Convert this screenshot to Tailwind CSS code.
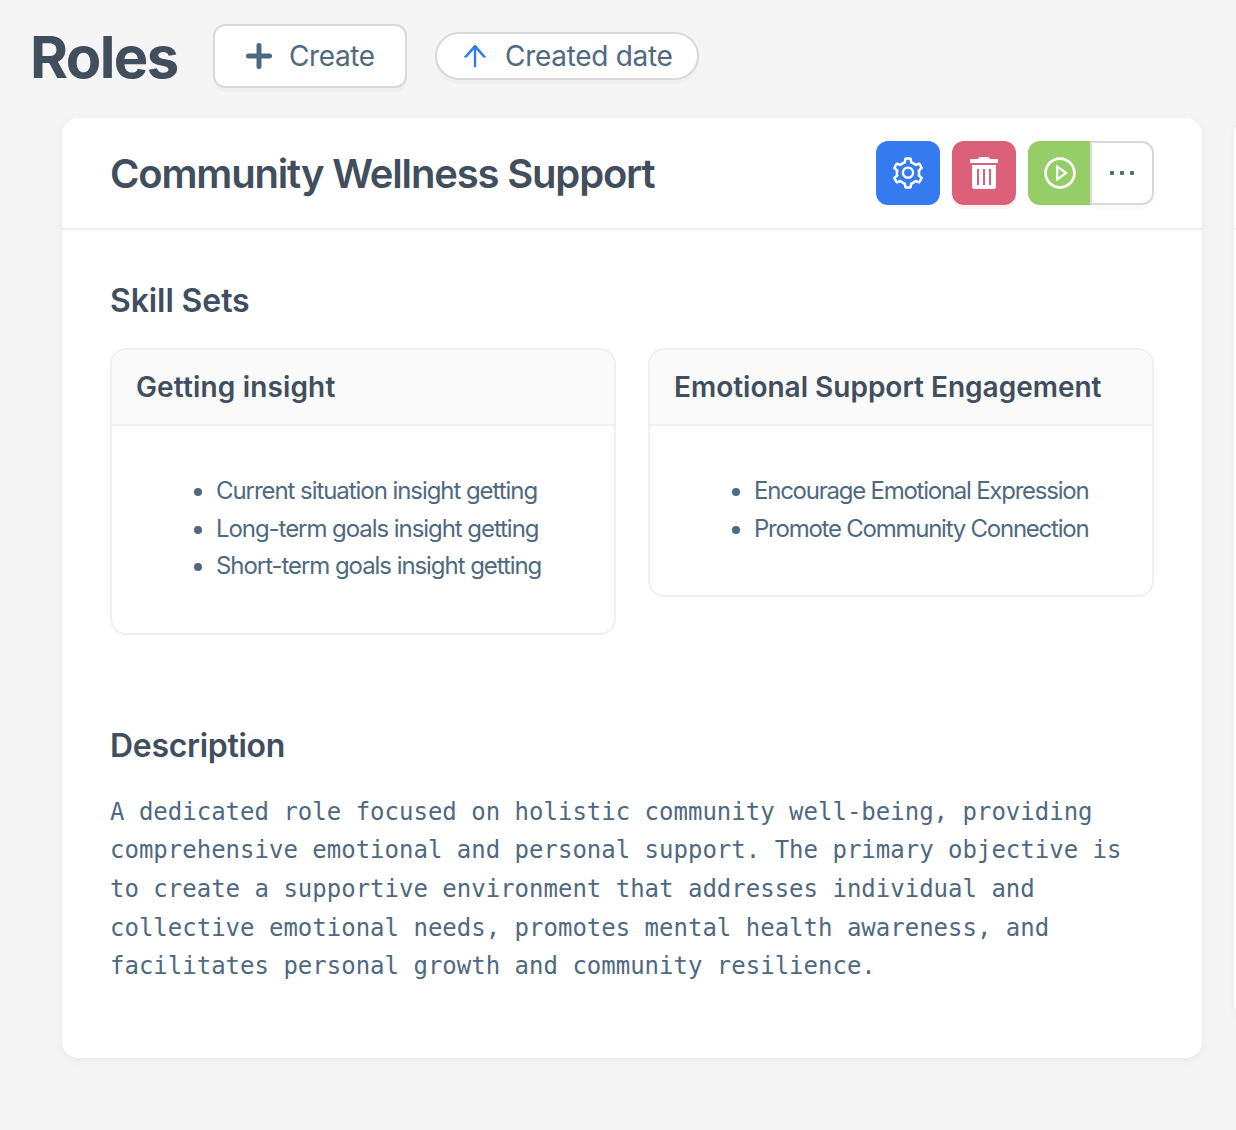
<!DOCTYPE html>
<html lang="en">
<head>
    <meta charset="UTF-8">
    <meta name="viewport" content="width=device-width, initial-scale=1.0">
    <title>Roles</title>
    <script src="https://cdn.jsdelivr.net/npm/@tailwindcss/browser@4"></script>
</head>
<body class="bg-[#f5f5f5] font-['Inter',sans-serif] text-[#4f6980] h-screen overflow-hidden">
    <header class="flex items-center h-[118px] pb-[6px] pl-[30px] whitespace-nowrap">
        <h1 class="w-[183px] pt-[2px] text-[58px] leading-none font-bold tracking-[-1.6px] text-[#414e5e]">Roles</h1>
        <button class="flex items-center w-[194px] h-16 pl-[31px] bg-white border-2 border-[#d9d9d9] rounded-xl shadow-[0_4px_0_rgba(0,0,0,0.02)] text-[28px] tracking-[-0.4px]">
            <svg class="w-[26px] h-[26px] mr-[17px] shrink-0" viewBox="0 0 26 26" fill="none" stroke="currentColor" stroke-width="5" stroke-linecap="round"><path d="M13 2.5v21M2.5 13h21"/></svg>
            Create
        </button>
        <button class="flex items-center w-[264px] h-12 ml-7 pl-[22px] bg-white border-2 border-[#d9d9d9] rounded-full shadow-[0_4px_0_rgba(0,0,0,0.02)] text-[28px] tracking-[-0.3px]">
            <svg class="w-8 h-8 mr-[14px] shrink-0 text-[#347bf0]" viewBox="0 0 1024 1024" fill="currentColor"><path d="M868 545.5L536.1 163a31.96 31.96 0 00-48.3 0L156 545.5a7.97 7.97 0 006 13.2h81c4.6 0 9-2 12.1-5.5L474 300.9V864c0 4.4 3.6 8 8 8h60c4.4 0 8-3.6 8-8V300.9l218.9 252.3c3 3.5 7.4 5.5 12.1 5.5h81c6.8 0 10.5-8 6-13.2z"/></svg>
            Created date
        </button>
    </header>

    <main class="flex items-start gap-8 pl-[62px]">
        <article class="w-[1140px] h-[940px] shrink-0 bg-white rounded-2xl shadow-[0_2px_8px_rgba(0,0,0,0.06)]">
            <div class="flex items-center justify-between h-28 px-12 border-b-2 border-[#f0f0f0]">
                <h2 class="pt-[2px] text-[40px] font-semibold tracking-[-1.17px] text-[#414e5e] whitespace-nowrap">Community Wellness Support</h2>
                <div class="flex gap-3">
                    <button class="flex items-center justify-center size-16 rounded-xl bg-[#347bf0] text-white" aria-label="Settings">
                        <svg class="size-9" viewBox="0 0 1024 1024" fill="currentColor"><path d="M924.8 625.7l-65.5-56c3.1-19 4.7-38.4 4.7-57.8s-1.6-38.8-4.7-57.8l65.5-56a32.03 32.03 0 009.3-35.2l-.9-2.6a443.74 443.74 0 00-79.7-137.9l-1.8-2.1a32.12 32.12 0 00-35.1-9.5l-81.3 28.9c-30-24.6-63.5-44-99.7-57.6l-15.7-85a32.05 32.05 0 00-25.8-25.7l-2.7-.5c-52.1-9.4-106.9-9.4-159 0l-2.7.5a32.05 32.05 0 00-25.8 25.7l-15.8 85.4a351.86 351.86 0 00-99 57.4l-81.9-29.1a32 32 0 00-35.1 9.5l-1.8 2.1a446.02 446.02 0 00-79.7 137.9l-.9 2.6c-4.5 12.5-.8 26.5 9.3 35.2l66.3 56.6c-3.1 18.8-4.6 38-4.6 57.1 0 19.2 1.5 38.4 4.6 57.1L99 625.5a32.03 32.03 0 00-9.3 35.2l.9 2.6c18.1 50.4 44.9 96.9 79.7 137.9l1.8 2.1a32.12 32.12 0 0035.1 9.5l81.9-29.1c29.8 24.5 63.1 43.9 99 57.4l15.8 85.4a32.05 32.05 0 0025.8 25.7l2.7.5a449.4 449.4 0 00159 0l2.7-.5a32.05 32.05 0 0025.8-25.7l15.7-85a350 350 0 0099.7-57.6l81.3 28.9a32 32 0 0035.1-9.5l1.8-2.1c34.8-41.1 61.6-87.5 79.7-137.9l.9-2.6c4.5-12.3.8-26.3-9.3-35zM788.3 465.9c2.5 15.1 3.8 30.6 3.8 46.1s-1.3 31-3.8 46.1l-6.6 40.1 74.7 63.9a370.03 370.03 0 01-42.6 73.6L721 702.8l-31.4 25.8c-23.9 19.6-50.5 35-79.3 45.8l-38.1 14.3-17.9 97a377.5 377.5 0 01-85 0l-17.9-97.2-37.8-14.5c-28.5-10.8-55-26.2-78.7-45.7l-31.4-25.9-93.4 33.2c-17-22.9-31.2-47.6-42.6-73.6l75.5-64.5-6.5-40c-2.4-14.9-3.7-30.3-3.7-45.5 0-15.3 1.2-30.6 3.7-45.5l6.5-40-75.5-64.5c11.3-26.1 25.6-50.7 42.6-73.6l93.4 33.2 31.4-25.9c23.7-19.5 50.2-34.9 78.7-45.7l37.9-14.3 17.9-97.2c28.1-3.2 56.8-3.2 85 0l17.9 97 38.1 14.3c28.7 10.8 55.4 26.2 79.3 45.8l31.4 25.8 92.8-32.9c17 22.9 31.2 47.6 42.6 73.6L781.8 426l6.5 39.9zM512 326c-97.2 0-176 78.8-176 176s78.8 176 176 176 176-78.8 176-176-78.8-176-176-176zm79.2 255.2A111.6 111.6 0 01512 614c-29.9 0-58-11.7-79.2-32.8A111.6 111.6 0 01400 502c0-29.9 11.7-58 32.8-79.2C454 401.6 482.1 390 512 390c29.9 0 58 11.6 79.2 32.8A111.6 111.6 0 01624 502c0 29.9-11.7 58-32.8 79.2z"/></svg>
                    </button>
                    <button class="flex items-center justify-center size-16 rounded-xl bg-[#dc6079] text-white shadow-[0_4px_0_rgba(255,38,5,0.06)]" aria-label="Delete">
                        <svg class="w-7 h-8" viewBox="0 0 28 32" fill="currentColor">
                            <path fill-rule="evenodd" d="M2 8h24v21.5a2.5 2.5 0 0 1-2.5 2.5h-19A2.5 2.5 0 0 1 2 29.5zM7 12v16h2V12zM13 12v16h2V12zM19 12v16h2V12z"/>
                            <path d="M1 2h7l.8-1.3A1.5 1.5 0 0 1 10 0h8a1.5 1.5 0 0 1 1.2.7L20 2h7a1 1 0 0 1 1 1v2a1 1 0 0 1-1 1H1a1 1 0 0 1-1-1V3a1 1 0 0 1 1-1z"/>
                        </svg>
                    </button>
                    <div class="flex w-[126px]">
                        <button class="flex items-center justify-center w-[62px] h-16 pl-[2px] rounded-l-xl bg-[#95ce66] text-white" aria-label="Run">
                            <svg class="size-9" viewBox="0 0 1024 1024" fill="currentColor"><path d="M512 64C264.6 64 64 264.6 64 512s200.6 448 448 448 448-200.6 448-448S759.4 64 512 64zm0 820c-205.4 0-372-166.6-372-372s166.6-372 372-372 372 166.6 372 372-166.6 372-372 372z"/><path d="M719.4 499.1l-296.1-215A15.9 15.9 0 00398 297v430c0 13.1 14.8 20.5 25.3 12.9l296.1-215a15.9 15.9 0 000-25.8zm-257.6 134V390.9L628.5 512 461.8 633.1z"/></svg>
                        </button>
                        <button class="flex items-center justify-center gap-[6px] w-16 h-16 rounded-r-xl border-2 border-[#d9d9d9] bg-white shadow-[0_4px_0_rgba(0,0,0,0.02)]" aria-label="More">
                            <span class="size-1 rounded-[1px] bg-[#4f6980]"></span>
                            <span class="size-1 rounded-[1px] bg-[#4f6980]"></span>
                            <span class="size-1 rounded-[1px] bg-[#4f6980]"></span>
                        </button>
                    </div>
                </div>
            </div>

            <div class="px-12 pt-12">
                <h3 class="h-[70px] text-[32px] leading-[45px] font-semibold tracking-[-0.1px] text-[#414e5e]">Skill Sets</h3>
                <div class="grid grid-cols-2 items-start gap-8 h-[373px]">
                    <section class="border-2 border-[#f0f0f0] rounded-2xl overflow-hidden">
                        <h4 class="h-[76px] px-6 text-[28px] leading-[75px] font-semibold tracking-[0.15px] whitespace-nowrap text-[#414e5e] bg-[#fafafa] border-b-2 border-[#f0f0f0]">Getting insight</h4>
                        <ul class="pl-[104px] pt-[46px] pb-12 text-[24px] leading-[37.7px] tracking-[-1.06px] whitespace-nowrap">
                            <li class="relative before:absolute before:-left-[22px] before:top-[16px] before:size-2 before:rounded-full before:bg-[#4f6980]">Current situation insight getting</li>
                            <li class="relative before:absolute before:-left-[22px] before:top-[16px] before:size-2 before:rounded-full before:bg-[#4f6980]">Long-term goals insight getting</li>
                            <li class="relative before:absolute before:-left-[22px] before:top-[16px] before:size-2 before:rounded-full before:bg-[#4f6980]">Short-term goals insight getting</li>
                        </ul>
                    </section>
                    <section class="border-2 border-[#f0f0f0] rounded-2xl overflow-hidden">
                        <h4 class="h-[76px] px-6 text-[28px] leading-[75px] font-semibold tracking-[0px] whitespace-nowrap text-[#414e5e] bg-[#fafafa] border-b-2 border-[#f0f0f0]">Emotional Support Engagement</h4>
                        <ul class="pl-[104px] pt-[46px] pb-12 text-[24px] leading-[37.7px] tracking-[-1.24px] whitespace-nowrap">
                            <li class="relative before:absolute before:-left-[22px] before:top-[16px] before:size-2 before:rounded-full before:bg-[#4f6980]">Encourage Emotional Expression</li>
                            <li class="relative before:absolute before:-left-[22px] before:top-[16px] before:size-2 before:rounded-full before:bg-[#4f6980]">Promote Community Connection</li>
                        </ul>
                    </section>
                </div>
                <h3 class="h-[71.85px] text-[32px] leading-[50px] font-semibold tracking-[-0.3px] text-[#414e5e]">Description</h3>
                <p class="font-['DejaVu_Sans_Mono',monospace] text-[24px] leading-[38.57px] whitespace-nowrap">A dedicated role focused on holistic community well-being, providing<br>comprehensive emotional and personal support. The primary objective is<br>to create a supportive environment that addresses individual and<br>collective emotional needs, promotes mental health awareness, and<br>facilitates personal growth and community resilience.</p>
            </div>
        </article>

        <!-- next card, cut off by the window edge -->
        <article class="w-[1140px] h-[902px] shrink-0 bg-white rounded-2xl shadow-[0_2px_8px_rgba(0,0,0,0.06)]">
            <div class="h-28 border-b-2 border-[#f0f0f0]"></div>
        </article>
    </main>
</body>
</html>
